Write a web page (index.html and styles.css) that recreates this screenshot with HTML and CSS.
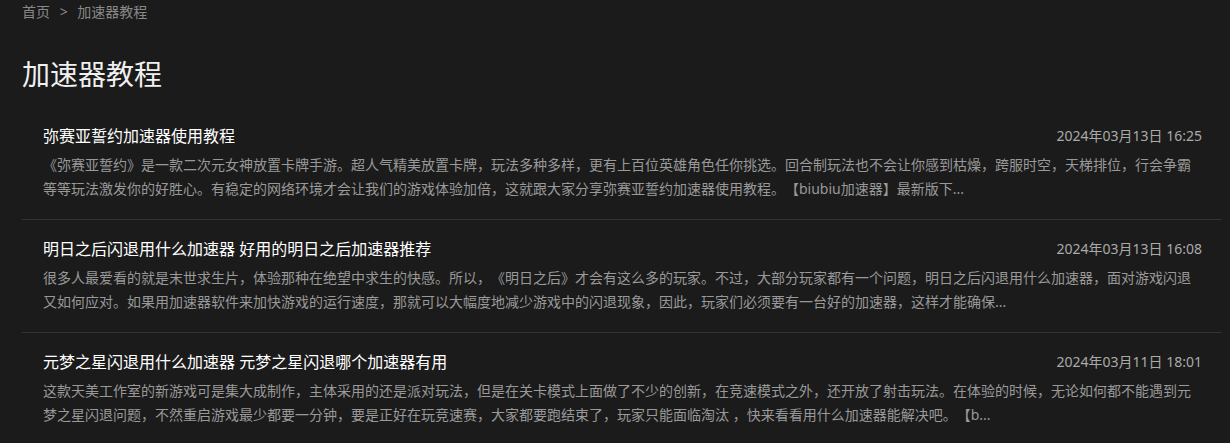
FILE: index.html
```html
<!DOCTYPE html>
<html lang="zh-CN">
<head>
    <meta charset="UTF-8">
    <meta name="viewport" content="width=device-width, initial-scale=1.0">
    <title>加速器教程</title>
    <link rel="stylesheet" href="styles.css">
</head>
<body>
<div class="page">

<!-- 面包屑 -->
<div class="crumbs">
    <a href="#">首页</a>
    <span class="sep">&gt;</span>
    <span>加速器教程</span>
</div>

<h1 class="page-title">加速器教程</h1>

<!-- 文章列表 -->
<ul class="news-list">
    <li class="news-item">
        <div class="news-head">
            <a class="news-title" href="#">弥赛亚誓约加速器使用教程</a>
            <span class="news-date">2024年03月13日 16:25</span>
        </div>
        <p class="news-desc">《弥赛亚誓约》是一款二次元女神放置卡牌手游。超人气精美放置卡牌，玩法多种多样，更有上百位英雄角色任你挑选。回合制玩法也不会让你感到枯燥，跨服时空，天梯排位，行会争霸等等玩法激发你的好胜心。有稳定的网络环境才会让我们的游戏体验加倍，这就跟大家分享弥赛亚誓约加速器使用教程。【biubiu加速器】最新版下...</p>
    </li>
    <li class="news-item">
        <div class="news-head">
            <a class="news-title" href="#">明日之后闪退用什么加速器 好用的明日之后加速器推荐</a>
            <span class="news-date">2024年03月13日 16:08</span>
        </div>
        <p class="news-desc">很多人最爱看的就是末世求生片，体验那种在绝望中求生的快感。所以，《明日之后》才会有这么多的玩家。不过，大部分玩家都有一个问题，明日之后闪退用什么加速器，面对游戏闪退又如何应对。如果用加速器软件来加快游戏的运行速度，那就可以大幅度地减少游戏中的闪退现象，因此，玩家们必须要有一台好的加速器，这样才能确保...</p>
    </li>
    <li class="news-item">
        <div class="news-head">
            <a class="news-title" href="#">元梦之星闪退用什么加速器 元梦之星闪退哪个加速器有用</a>
            <span class="news-date">2024年03月11日 18:01</span>
        </div>
        <p class="news-desc">这款天美工作室的新游戏可是集大成制作，主体采用的还是派对玩法，但是在关卡模式上面做了不少的创新，在竞速模式之外，还开放了射击玩法。在体验的时候，无论如何都不能遇到元梦之星闪退问题，不然重启游戏最少都要一分钟，要是正好在玩竞速赛，大家都要跑结束了，玩家只能面临淘汰 ，快来看看用什么加速器能解决吧。【b...</p>
    </li>
</ul>

</div>
</body>
</html>
```

FILE: styles.css
```css
body {
    margin: 0;
    background-color: #1b1b1b;
    font-family: "Noto Sans", "Noto Sans CJK SC", sans-serif;
    color: #999;
    overflow: hidden;
    text-spacing-trim: space-all;
}
a {
    text-decoration: none;
}
.page {
    padding: 0 8px 0 22px;
}
.crumbs {
    font-size: 14px;
    line-height: 24px;
    color: #888;
}
.crumbs a {
    color: #888;
}
.crumbs .sep {
    margin: 0 6px;
}
.page-title {
    margin: 30px 0 13px;
    font-size: 28px;
    line-height: 40px;
    font-weight: normal;
    color: #f0f0f0;
}
.news-list {
    list-style: none;
    margin: 0;
    padding: 0;
}
.news-item {
    padding: 17px 20px 18px 21px;
    border-bottom: 1px solid #333;
}
.news-item:last-child {
    border-bottom: none;
}
.news-head {
    display: flex;
    justify-content: space-between;
    align-items: center;
    line-height: 24px;
}
.news-title {
    font-size: 16px;
    color: #fff;
}
.news-date {
    font-size: 14px;
    color: #aaa;
}
.news-desc {
    margin: 5px 0 0;
    font-size: 14px;
    line-height: 24px;
    color: #999;
}
```
